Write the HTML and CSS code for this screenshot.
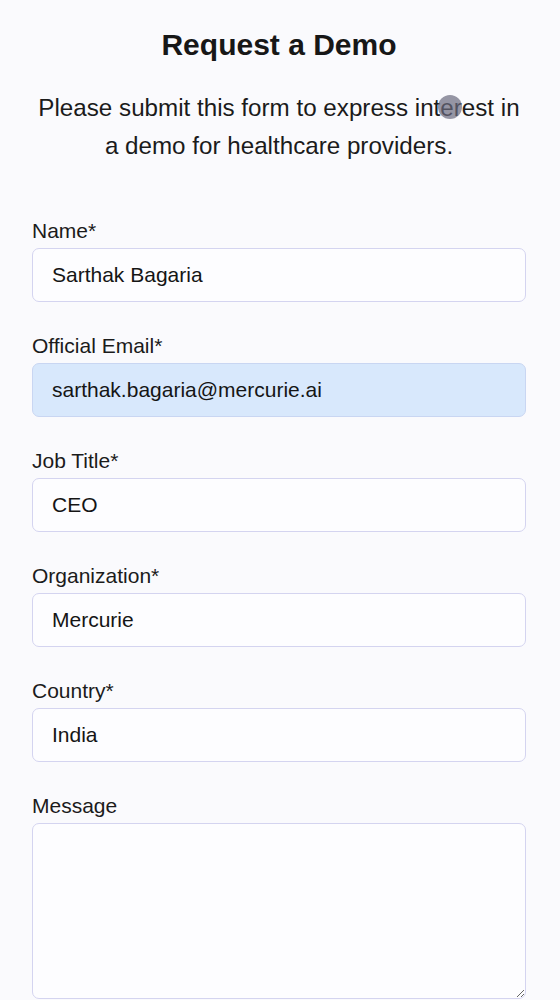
FILE: index.html
```html
<!DOCTYPE html>
<html lang="en">
<head>
<meta charset="utf-8">
<title>Request a Demo</title>
<link rel="stylesheet" href="styles.css">
</head>
<body>
<main class="page">
  <h1 class="title">Request a Demo</h1>
  <p class="subtitle">Please submit this form to express interest in a demo for healthcare providers.</p>
  <form class="form">
    <div class="field">
      <label class="label" for="name">Name*</label>
      <input class="input" id="name" type="text" value="Sarthak Bagaria">
    </div>
    <div class="field">
      <label class="label" for="email">Official Email*</label>
      <input class="input input-autofill" id="email" type="email" value="sarthak.bagaria@mercurie.ai">
    </div>
    <div class="field">
      <label class="label" for="job">Job Title*</label>
      <input class="input" id="job" type="text" value="CEO">
    </div>
    <div class="field">
      <label class="label" for="org">Organization*</label>
      <input class="input" id="org" type="text" value="Mercurie">
    </div>
    <div class="field">
      <label class="label" for="country">Country*</label>
      <input class="input" id="country" type="text" value="India">
    </div>
    <div class="field">
      <label class="label" for="msg">Message</label>
      <textarea class="input textarea" id="msg"></textarea>
    </div>
  </form>
  <span class="cursor"></span>
</main>
</body>
</html>
```
FILE: styles.css
```css
html, body {
  margin: 0;
  padding: 0;
  background: #fafafd;
}
body {
  font-family: "Liberation Sans", Arial, sans-serif;
  color: #1b1b1b;
  overflow: hidden;
}
.page {
  position: relative;
  padding: 27px 34px 0 32px;
}
.title {
  margin: 0;
  font-size: 30px;
  line-height: 36px;
  font-weight: 700;
  text-align: center;
  color: #171717;
}
.subtitle {
  margin: 26px 0 0;
  font-size: 24.2px;
  line-height: 38px;
  text-align: center;
}
.form {
  display: flex;
  flex-direction: column;
  gap: 32px;
  margin-top: 54px;
}
.field {
  display: flex;
  flex-direction: column;
  gap: 5px;
}
.label {
  font-size: 21px;
  line-height: 24px;
}
.input {
  box-sizing: border-box;
  width: 100%;
  height: 54px;
  margin: 0;
  padding: 0 19px;
  font-family: "Liberation Sans", Arial, sans-serif;
  font-size: 21px;
  color: #151515;
  background: #fdfdff;
  border: 1px solid #d4d4f0;
  border-radius: 7px;
  outline: none;
}
.input-autofill {
  background: #d8e8fc;
  border-color: #c9d6f2;
}
.textarea {
  height: 176px;
  padding-top: 12px;
  resize: vertical;
}
.cursor {
  position: absolute;
  left: 438px;
  top: 95px;
  width: 24px;
  height: 24px;
  border-radius: 50%;
  background: rgba(105, 105, 125, 0.7);
}
```
